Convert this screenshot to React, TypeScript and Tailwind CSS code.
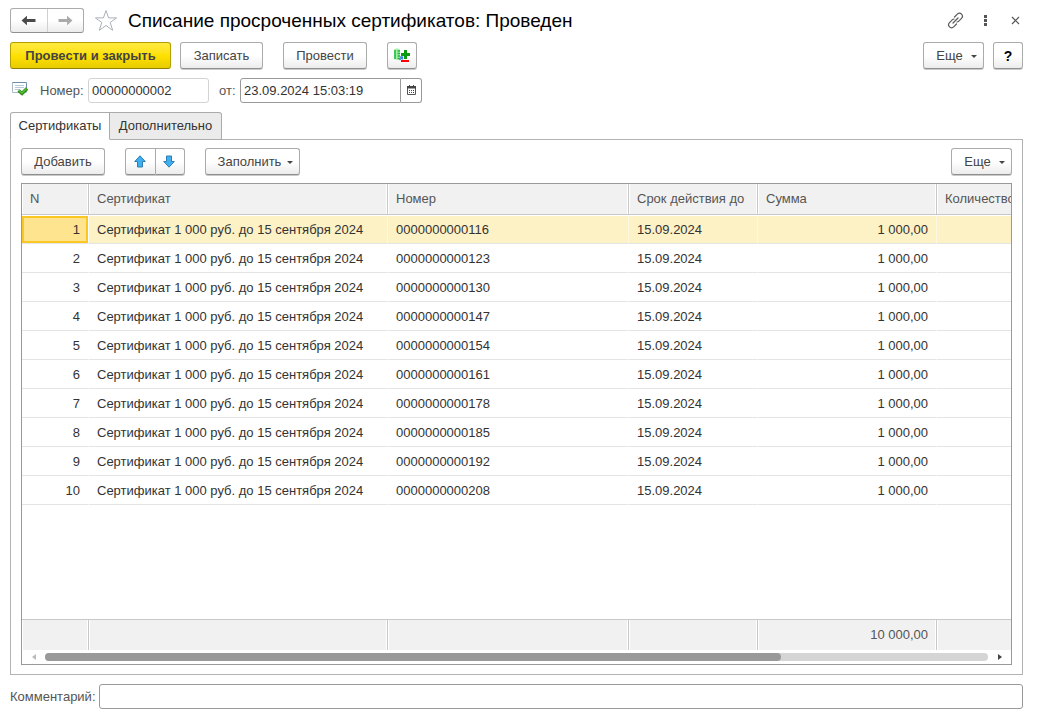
import clsx from "clsx";
import React, { useState } from "react";

const BUTTON =
  "flex h-[27px] items-center justify-center rounded-[3px] border border-[#ababab] border-b-[#8f8f8f] bg-linear-to-b from-white from-50% to-[#ececec] text-[#444] shadow-[0_1px_0_#c9c9c9]";

const FIELD = "h-[25px] rounded-[3px] border bg-white px-[3px] text-[#333] outline-none";

const rows = [
  "0000000000116",
  "0000000000123",
  "0000000000130",
  "0000000000147",
  "0000000000154",
  "0000000000161",
  "0000000000178",
  "0000000000185",
  "0000000000192",
  "0000000000208",
].map((number, index) => ({
  id: index + 1,
  name: "Сертификат 1 000 руб. до 15 сентября 2024",
  number,
  date: "15.09.2024",
  sum: "1 000,00",
}));

const headers = [
  "N",
  "Сертификат",
  "Номер",
  "Срок действия до",
  "Сумма",
  "Количество",
];

const totals = ["", "", "", "", "10 000,00", ""];

const Caret = () => (
  <svg width="6" height="3" viewBox="0 0 6 3" className="mt-0.5">
    <path d="M0 0h6L3 3z" fill="#444" />
  </svg>
);

const ArrowIcon = ({ color, flip }: { color: string; flip?: boolean }) => (
  <svg
    width="15"
    height="11"
    viewBox="0 0 15 11"
    className={clsx(flip && "rotate-180")}
  >
    <path d="M3 5.5h11.500" stroke={color} strokeWidth="3" />
    <path d="M.5 5.500 6 .8v2.700L4 5.500l2 2v2.700z" fill={color} />
  </svg>
);

const MoveIcon = ({ flip }: { flip?: boolean }) => (
  <svg
    width="12"
    height="13"
    viewBox="0 0 12 13"
    className={clsx("mr-0.5", flip && "rotate-180")}
  >
    <path
      d="M6 .8 11.300 6.500H8.500v5.500h-5V6.500H.7z"
      fill="#41aef0"
      stroke="#2d7fb5"
      strokeLinejoin="round"
    />
  </svg>
);

const StarIcon = () => (
  <svg width="24" height="23" viewBox="0 0 24 23">
    <path
      d="m12 1.5 2.600 7.400h8L16.200 13.400l2.500 7.900L12 16.500l-6.700 4.800 2.500-7.900L1.400 8.900h8z"
      fill="#fff"
      stroke="#aab1ba"
    />
  </svg>
);

const LinkIcon = () => (
  <svg
    width="17"
    height="17"
    viewBox="0 0 17 17"
    fill="none"
    stroke="#5a5a5a"
    strokeWidth="1.2"
    strokeLinecap="round"
  >
    <path d="m6 11 5-5" />
    <path d="m7.500 5 2.800-2.900a2.900 2.900 0 0 1 4.200 0 3 3 0 0 1 0 4.200L11.500 9.300a2.500 2.500 0 0 1-1.500.7" />
    <path d="m9.500 12-2.800 2.900a2.900 2.900 0 0 1-4.200 0 3 3 0 0 1 0-4.200L5.500 7.700A2.500 2.500 0 0 1 7 7" />
  </svg>
);

const PostedIcon = () => (
  <svg width="16" height="14" viewBox="0 0 16 14">
    <path d="M.5.5h14v10H.5z" fill="#fff" stroke="#a9bccb" />
    <path d="M.5.5h14M14.500 1v5" stroke="#6d8fac" />
    <path d="M3 3.500h9M3 5.500h9M3 7.500h4" stroke="#b9c9d6" />
    <path d="m6.500 8.500 3.500 3 5-5" fill="none" stroke="#2f8a1c" strokeWidth="3.400" />
    <path d="m7 8.500 3 2.500L14.500 6.500" fill="none" stroke="#55c136" strokeWidth="1.600" />
  </svg>
);

const RegisterIcon = () => (
  <svg width="16" height="16" viewBox="0 0 16 16">
    <path d="M0 2c0-2 6-2 6 0v9c-1 1-5 1-6 0z" fill="#a6efab" />
    <path d="M1 2v9M3.500 3H6M3.500 5.500H6M3.500 8H6M3.500 10.500H6" stroke="#1fb93a" strokeWidth="1.500" />
    <path d="M11.500 2v9M7 6.500h9" stroke="#0c9a12" strokeWidth="3" />
    <path d="M5.500 12 8 9.500M6 9h2.500v2.500" fill="none" stroke="#3c86d8" strokeWidth="1.300" />
    <path d="M7 13h8" stroke="#f00" strokeWidth="2" />
  </svg>
);

const CalendarIcon = () => (
  <svg width="9" height="10" viewBox="0 0 9 10" className="mb-0.5">
    <path d="M.5 1.500h8v8h-8z" fill="#fff" stroke="#555" />
    <path d="M0 1h9v2.500H0zM2 0h1v1H2zM6 0h1v1H6z" fill="#444" />
    <path d="M2 5.500h5M2 7.500h5" stroke="#444" strokeDasharray="1 1" />
  </svg>
);

const Columns = () => (
  <colgroup>
    <col className="w-[67px]" />
    <col className="w-[299px]" />
    <col className="w-[241px]" />
    <col className="w-[129px]" />
    <col className="w-[179px]" />
    <col />
  </colgroup>
);

const MoreButton = () => (
  <button type="button" className={clsx(BUTTON, "w-[61px] gap-2 pl-1.5")}>
    Еще
    <Caret />
  </button>
);

const CertificateTable = () => {
  const [selected, setSelected] = useState(1);

  return (
    <div className="flex min-h-0 flex-1 flex-col overflow-hidden border border-[#999]">
      <table className="w-[1265px] min-w-full shrink-0 table-fixed border-separate border-spacing-0">
        <Columns />
        <thead>
          <tr className="h-[31px] text-left text-[#555]">
            {headers.map((title) => (
              <th
                key={title}
                className="border-r border-b border-[#c8c8c8] bg-[#f1f1f1] px-2 font-normal whitespace-nowrap shadow-[inset_1px_0_#fff,inset_-1px_0_#fff]"
              >
                {title}
              </th>
            ))}
          </tr>
        </thead>
        <tbody>
          {rows.map((row) => {
            const active = row.id === selected;
            const cell = clsx(
              "border-t border-r border-b border-t-white border-b-[#e4e4e4] px-2 pt-px whitespace-nowrap",
              active ? "border-r-[#fdf8e2] bg-[#fdf1c6]" : "border-r-white",
            );

            return (
              <tr
                key={row.id}
                className="h-[29px] text-[#333]"
                onClick={() => setSelected(row.id)}
              >
                <td
                  className={clsx(
                    "border-t border-r border-b border-t-white border-r-white border-b-[#e4e4e4] px-2 pt-px text-right",
                    active && "bg-[#ffe48f] shadow-[inset_0_0_0_2px_#fbc823]",
                  )}
                >
                  {row.id}
                </td>
                <td className={cell}>{row.name}</td>
                <td className={cell}>{row.number}</td>
                <td className={cell}>{row.date}</td>
                <td className={clsx(cell, "text-right")}>{row.sum}</td>
                <td className={cell} />
              </tr>
            );
          })}
        </tbody>
      </table>
      <div className="flex-1" />
      <table className="w-[1265px] min-w-full shrink-0 table-fixed border-separate border-spacing-0">
        <Columns />
        <tbody>
          <tr className="h-[31px] text-right text-[#555]">
            {totals.map((total, index) => (
              <td
                key={headers[index]}
                className="border-t border-r border-[#c8c8c8] bg-[#f1f1f1] px-2 shadow-[inset_1px_0_#fff,inset_-1px_0_#fff]"
              >
                {total}
              </td>
            ))}
          </tr>
        </tbody>
      </table>
      <div className="flex h-3.5 shrink-0 items-center">
        <button type="button" aria-label="Влево" className="flex w-[23px] justify-center">
          <svg width="4" height="6" viewBox="0 0 4 6">
            <path d="M4 0v6L0 3z" fill="#bbb" />
          </svg>
        </button>
        <div className="h-2 flex-1 rounded-full bg-[#d5d5d5]">
          <div className="h-2 w-[78%] rounded-full bg-[#999]" />
        </div>
        <button type="button" aria-label="Вправо" className="flex w-[23px] justify-center">
          <svg width="4" height="6" viewBox="0 0 4 6">
            <path d="M0 0v6l4-3z" fill="#444" />
          </svg>
        </button>
      </div>
    </div>
  );
};

const App = () => {
  const [date, setDate] = useState("23.09.2024 15:03:19");
  const [comment, setComment] = useState("");

  return (
    <div className="flex h-screen min-h-[600px] flex-col bg-white px-2.5 pt-2 pb-2 pr-[15px] font-['Liberation_Sans',Arial,sans-serif] text-[13px] leading-4 text-[#555]">
      <header className="flex h-[25px] items-center">
        <div className="flex h-[25px] w-[74px] rounded-[3px] border border-[#ababab] border-b-[#8f8f8f] bg-linear-to-b from-white from-50% to-[#ececec]">
          <button
            type="button"
            aria-label="Назад"
            className="flex flex-1 items-center justify-center border-r border-[#d0d0d0]"
          >
            <ArrowIcon color="#4a4a4a" />
          </button>
          <button
            type="button"
            aria-label="Вперед"
            className="flex flex-1 items-center justify-center"
          >
            <ArrowIcon color="#aaa" flip />
          </button>
        </div>
        <button type="button" aria-label="В избранное" className="ml-2.5">
          <StarIcon />
        </button>
        <h1 className="ml-2.5 flex-1 text-[19px] leading-6 whitespace-nowrap text-black">
          Списание просроченных сертификатов: Проведен
        </h1>
        <button type="button" aria-label="Ссылка">
          <LinkIcon />
        </button>
        <button type="button" aria-label="Меню" className="ml-5">
          <svg width="3" height="11" viewBox="0 0 3 11" fill="#555">
            <path d="M0 0h3v3H0zM0 4h3v3H0zM0 8h3v3H0z" />
          </svg>
        </button>
        <button type="button" aria-label="Закрыть" className="mr-[3px] ml-6">
          <svg width="9" height="9" viewBox="0 0 9 9">
            <path d="m1 1 7 7M8 1 1 8" stroke="#555" strokeWidth="1.200" />
          </svg>
        </button>
      </header>

      <div className="mt-[9px] flex items-center">
        <button
          type="button"
          className="h-[27px] w-[161px] rounded-[3px] border border-[#b3a000] border-b-[#8f8000] bg-linear-to-b from-[#ffea3d] via-[#ffe100] to-[#e8cc00] font-bold text-[#444]"
        >
          Провести и закрыть
        </button>
        <button type="button" className={clsx(BUTTON, "ml-[9px] w-[83px]")}>
          Записать
        </button>
        <button type="button" className={clsx(BUTTON, "ml-5 w-[84px]")}>
          Провести
        </button>
        <button
          type="button"
          aria-label="Движения документа"
          className={clsx(BUTTON, "ml-5 w-[30px]")}
        >
          <RegisterIcon />
        </button>
        <div className="ml-auto flex gap-[9px]">
          <MoreButton />
          <button
            type="button"
            className={clsx(BUTTON, "w-[30px] text-sm font-bold text-black")}
          >
            ?
          </button>
        </div>
      </div>

      <div className="mt-[9px] flex items-center">
        <span className="ml-0.5 w-7 pb-1">
          <PostedIcon />
        </span>
        <label htmlFor="number" className="w-12">
          Номер:
        </label>
        <input
          id="number"
          readOnly
          value="00000000002"
          className={clsx(FIELD, "w-[121px] border-[#d3d3d3]")}
        />
        <label htmlFor="date" className="ml-2.5 w-[21px]">
          от:
        </label>
        <input
          id="date"
          value={date}
          onChange={(e) => setDate(e.target.value)}
          className={clsx(FIELD, "w-[161px] rounded-r-none border-[#999]")}
        />
        <button
          type="button"
          aria-label="Выбрать дату"
          className="flex h-[25px] w-[21px] items-center justify-center rounded-r-[3px] border border-l-0 border-[#999]"
        >
          <CalendarIcon />
        </button>
      </div>

      <div role="tablist" className="z-10 mt-[9px] -mb-px flex h-7">
        <button
          type="button"
          role="tab"
          aria-selected="true"
          className="w-[100px] rounded-tl-[3px] border border-[#ababab] border-b-white bg-white text-[#333]"
        >
          Сертификаты
        </button>
        <button
          type="button"
          role="tab"
          aria-selected="false"
          className="w-28 rounded-tr-[3px] border border-l-0 border-[#ababab] bg-[#ebebeb] text-[#333]"
        >
          Дополнительно
        </button>
      </div>

      <main className="flex min-h-0 flex-1 flex-col border border-[#b3b3b3] px-2.5 pt-2 pb-[9px]">
        <div className="mb-2 flex">
          <button type="button" className={clsx(BUTTON, "w-[84px]")}>
            Добавить
          </button>
          <button
            type="button"
            aria-label="Вверх"
            className={clsx(BUTTON, "ml-5 w-[31px] rounded-r-none")}
          >
            <MoveIcon />
          </button>
          <button
            type="button"
            aria-label="Вниз"
            className={clsx(BUTTON, "w-[29px] rounded-l-none border-l-0")}
          >
            <MoveIcon flip />
          </button>
          <button
            type="button"
            className={clsx(BUTTON, "ml-5 w-[95px] gap-1.5 pl-1.5")}
          >
            Заполнить
            <Caret />
          </button>
          <div className="ml-auto">
            <MoreButton />
          </div>
        </div>
        <CertificateTable />
      </main>

      <div className="mt-[9px] flex items-center">
        <label htmlFor="comment" className="w-[89px]">
          Комментарий:
        </label>
        <input
          id="comment"
          value={comment}
          onChange={(e) => setComment(e.target.value)}
          className={clsx(FIELD, "min-w-0 flex-1 border-[#999]")}
        />
      </div>
    </div>
  );
};

export default App;
